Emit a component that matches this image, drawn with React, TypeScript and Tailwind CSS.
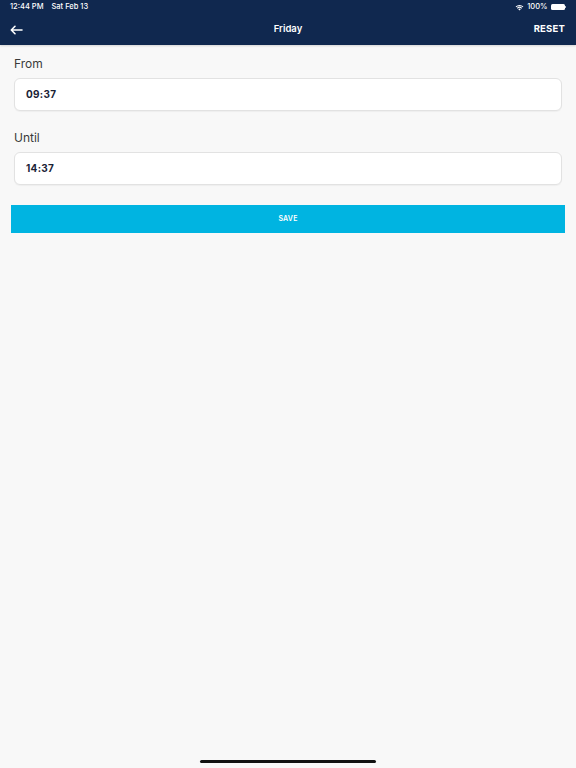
import React from "react";

export default function App() {
  return (
    <div className="w-[576px] h-[768px] bg-[#f8f8f8] flex flex-col relative overflow-hidden" style={{ fontFamily: "Inter, 'Noto Sans', sans-serif" }}>
      <div className="bg-[#10284f] h-[45px] flex flex-col shrink-0 shadow-[0_1px_2px_rgba(0,0,0,0.15)]">
        <div className="h-[14px] flex items-center justify-between px-[10px] text-white text-[7.5px] font-medium">
          <div className="flex gap-[8px]">
            <span>12:44 PM</span>
            <span>Sat Feb 13</span>
          </div>
          <div className="flex items-center gap-[3px]">
            <svg width="9" height="7" viewBox="0 0 12 9" fill="white">
              <path d="M6 8.5 L4.3 6.7 A2.5 2.5 0 0 1 7.7 6.7 Z" />
              <path d="M2.6 5 A4.8 4.8 0 0 1 9.4 5 L8.4 6 A3.4 3.4 0 0 0 3.6 6 Z" />
              <path d="M0.8 3.2 A7.4 7.4 0 0 1 11.2 3.2 L10.2 4.2 A6 6 0 0 0 1.8 4.2 Z" />
            </svg>
            <span>100%</span>
            <div className="flex items-center">
              <div className="w-[14px] h-[6px] bg-white rounded-[1.5px]" />
              <div className="w-[1px] h-[2px] bg-white/70 ml-[0.5px]" />
            </div>
          </div>
        </div>
        <div className="flex-1 flex items-center justify-between px-[10px] text-white relative">
          <svg width="13" height="10" viewBox="0 0 13 10" fill="none" stroke="white" strokeWidth="1.6" strokeLinecap="round" strokeLinejoin="round">
            <path d="M12 5 H1.5 M5 1.3 L1.3 5 L5 8.7" />
          </svg>
          <span className="absolute left-1/2 -translate-x-1/2 text-[9.5px] font-semibold">Friday</span>
          <span className="text-[9.5px] font-bold tracking-[0.2px] mr-[1px]">RESET</span>
        </div>
      </div>

      <div className="flex flex-col px-[14px] pt-[11px]">
        <div className="text-[12px] text-[#3a3a3a] leading-[15px]">From</div>
        <div className="mt-[7px] h-[33px] bg-white border border-[#e2e2e2] rounded-[6px] flex items-center px-[11px] shadow-[0_1px_1px_rgba(0,0,0,0.04)]">
          <span className="text-[10px] font-bold text-[#1a2236] tracking-[0.3px]">09:37</span>
        </div>
        <div className="mt-[19px] text-[12px] text-[#3a3a3a] leading-[15px]">Until</div>
        <div className="mt-[7px] h-[33px] bg-white border border-[#e2e2e2] rounded-[6px] flex items-center px-[11px] shadow-[0_1px_1px_rgba(0,0,0,0.04)]">
          <span className="text-[10px] font-bold text-[#1a2236] tracking-[0.3px]">14:37</span>
        </div>
      </div>
      <div className="px-[11px] mt-[20px]">
        <div className="h-[28px] bg-[#00b4e1] flex items-center justify-center">
          <span className="text-white text-[7px] font-semibold tracking-[0.2px]">SAVE</span>
        </div>
      </div>

      <div className="absolute bottom-[5px] left-[200px] w-[176px] h-[3px] rounded-full bg-[#111]" />
    </div>
  );
}
